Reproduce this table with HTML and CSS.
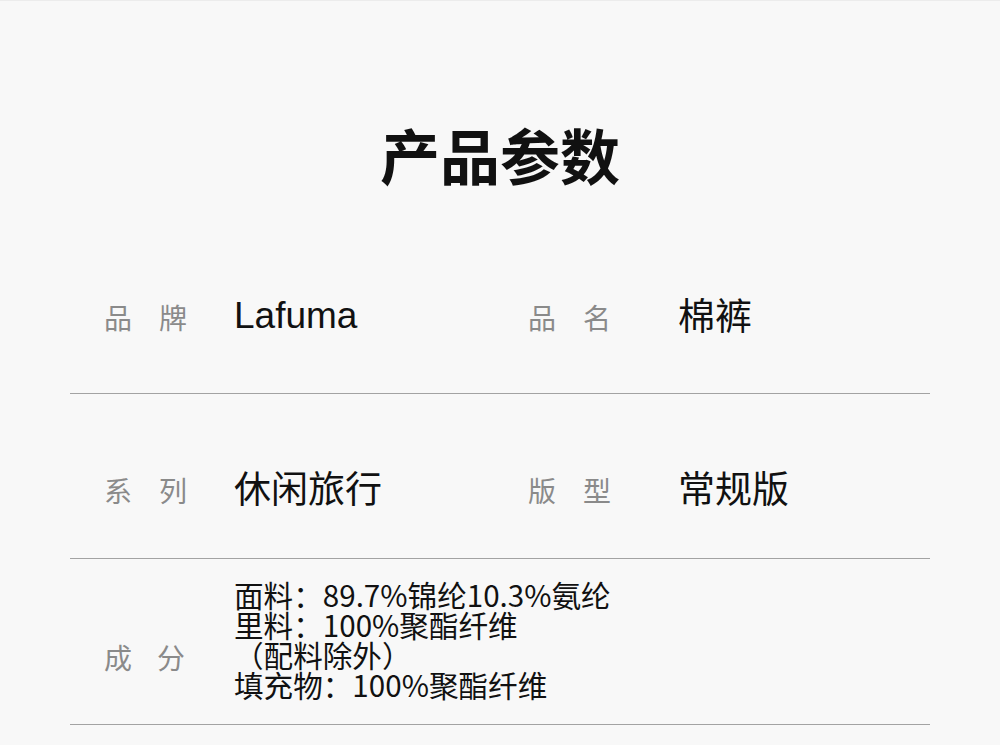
FILE: index.html
```html
<!DOCTYPE html>
<html lang="zh-CN">
<head>
<meta charset="utf-8">
<title>产品参数</title>
<link rel="stylesheet" href="styles.css">
</head>
<body>
<div class="page">
  <h1 class="title">产品参数</h1>
  <div class="table">
    <div class="row row-1">
      <div class="label">品牌</div>
      <div class="value latin">Lafuma</div>
      <div class="label">品名</div>
      <div class="value">棉裤</div>
    </div>
    <div class="row row-2">
      <div class="label">系列</div>
      <div class="value">休闲旅行</div>
      <div class="label">版型</div>
      <div class="value">常规版</div>
    </div>
    <div class="row row-3">
      <div class="label label-low">成分</div>
      <div class="value multi">面料：89.7%锦纶10.3%氨纶<br>里料：100%聚酯纤维<br>（配料除外）<br>填充物：100%聚酯纤维</div>
    </div>
  </div>
</div>
</body>
</html>
```
FILE: styles.css
```css
html, body {
  margin: 0;
  padding: 0;
  background: #f8f8f8;
}
body {
  font-family: "Noto Sans CJK SC", "Noto Sans", sans-serif;
  color: #111;
}
.page {
  width: 1000px;
  height: 745px;
  overflow: hidden;
  border-top: 1px solid #ececec;
  box-sizing: border-box;
}
.title {
  margin: 0;
  padding-top: 123px;
  height: 60px;
  line-height: 60px;
  font-size: 60px;
  font-weight: 700;
  text-align: center;
  color: #111;
  margin-bottom: 45px;
}
.table {
  margin: 0 70px;
}
.row {
  display: grid;
  grid-template-columns: 130px 294px 150px 1fr;
  padding-left: 34px;
  align-items: center;
  border-bottom: 1px solid #a3a3a3;
  height: 164px;
  box-sizing: content-box;
}
.row-1 {
  height: 152px;
  padding-top: 12px;
}
.row-2 {
  height: 136px;
  padding-top: 28px;
}
.row-3 {
  height: 165px;
}
.label {
  font-size: 28px;
  line-height: 40px;
  letter-spacing: 27px;
  color: #8a8a8a;
  white-space: nowrap;
}
.label-low {
  padding-top: 30px;
  letter-spacing: 25px;
}
.value {
  font-size: 37px;
  line-height: 48px;
  margin-bottom: 6px;
  color: #111;
  white-space: nowrap;
}
.latin {
  font-family: "Liberation Sans", "Noto Sans CJK SC", sans-serif;
  margin-bottom: 2px;
}
.multi {
  grid-column: 2 / 5;
  font-size: 29.6px;
  line-height: 30px;
  margin-bottom: 4px;
}
```
